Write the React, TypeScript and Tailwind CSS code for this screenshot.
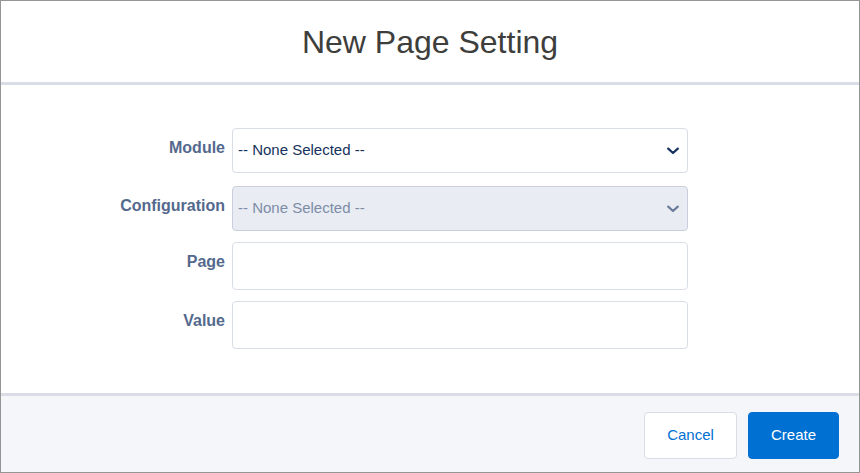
import React from 'react';

const Chevron = ({ color }: { color: string }) => (
  <svg width="12" height="8" viewBox="0 0 12 8" fill="none">
    <path d="M1.2 1.6 L6 6 L10.8 1.6" stroke={color} strokeWidth="2.2" strokeLinecap="round" strokeLinejoin="round" />
  </svg>
);

interface RowProps {
  label: string;
  height: string;
  children: React.ReactNode;
  className?: string;
}

const Row: React.FC<RowProps> = ({ label, height, children, className = '' }) => (
  <div className={`flex items-start ${className}`}>
    <label className="w-[231px] shrink-0 pt-[8px] pr-[7px] text-right text-[16px] leading-6 font-bold text-[#54698d]">
      {label}
    </label>
    <div className={`w-[456px] ${height}`}>{children}</div>
  </div>
);

export default function App() {
  return (
    <div
      className="box-border flex h-[473px] w-[860px] flex-col border border-[#959595] bg-white"
      style={{ fontFamily: '"Liberation Sans", Arial, sans-serif' }}
    >
      {/* header */}
      <div className="box-border flex h-[84px] shrink-0 items-center justify-center border-b-[3px] border-[#d8dde6]">
        <h1 className="text-[32px] leading-none font-normal text-[#3e3e3c]">New Page Setting</h1>
      </div>

      {/* body */}
      <div className="h-[308px] shrink-0 pt-[43px]">
        <Row label="Module" height="h-[45px]">
          <div className="box-border flex h-full items-center justify-between rounded-[4px] border border-[#d8dde6] bg-white pl-[5px] pr-[8px] text-[15px] text-[#16325c]">
            <span>-- None Selected --</span>
            <Chevron color="#16325c" />
          </div>
        </Row>
        <Row label="Configuration" height="h-[45px]" className="mt-[13px]">
          <div className="box-border flex h-full items-center justify-between rounded-[4px] border border-[#c9d0db] bg-[#e9ecf3] pl-[5px] pr-[8px] text-[15px] text-[#7d8ca6]">
            <span>-- None Selected --</span>
            <Chevron color="#6a7c9b" />
          </div>
        </Row>
        <Row label="Page" height="h-[48px]" className="mt-[11px]">
          <input className="box-border h-full w-full rounded-[4px] border border-[#d8dde6] bg-white px-[6px] text-[15px] text-[#16325c] outline-none" />
        </Row>
        <Row label="Value" height="h-[48px]" className="mt-[11px]">
          <input className="box-border h-full w-full rounded-[4px] border border-[#d8dde6] bg-white px-[6px] text-[15px] text-[#16325c] outline-none" />
        </Row>
      </div>

      {/* footer */}
      <div className="box-border flex flex-1 items-start justify-end gap-[11px] border-t-[3px] border-[#d8dde6] bg-[#f4f6f9] pt-[16px] pr-[20px]">
        <button className="box-border h-[47px] w-[93px] rounded-[4px] border border-[#d8dde6] bg-white text-[15px] text-[#0070d2]">
          Cancel
        </button>
        <button className="box-border h-[47px] w-[91px] rounded-[4px] border border-[#0070d2] bg-[#0070d2] text-[15px] text-white">
          Create
        </button>
      </div>
    </div>
  );
}
